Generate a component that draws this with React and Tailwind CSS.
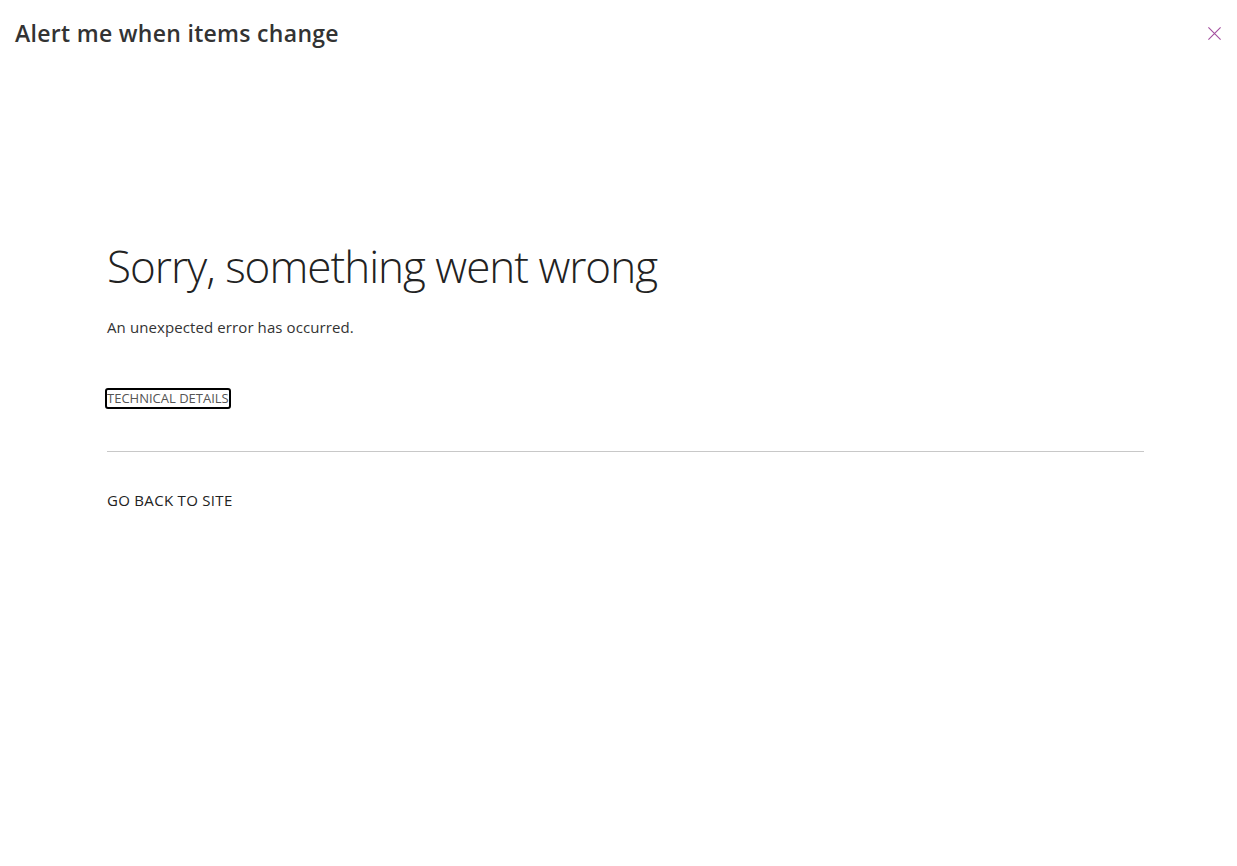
export default function App() {
  return (
    <div className="min-h-screen w-full bg-white text-[#333] font-['Open_Sans',sans-serif]">
      <header className="flex items-center justify-between pl-[15px] pr-[8px] pt-[16px]">
        <h1 className="text-[23px] leading-[34px] font-semibold tracking-[0.3px] text-[#333]">
          Alert me when items change
        </h1>
        <button className="w-[30px] h-[30px] flex items-center justify-center text-[#a4509f]" aria-label="Close">
          <svg width="15" height="15" viewBox="0 0 16 16" fill="none" stroke="currentColor" strokeWidth="1.2">
            <path d="M1.5 1.5 L14.5 14.5 M14.5 1.5 L1.5 14.5" />
          </svg>
        </button>
      </header>

      <main className="pl-[107px] pr-[93px] pt-[188px]">
        <h2 className="text-[44px] leading-[56px] font-light tracking-[-1px] text-[#222]">
          Sorry, something went wrong
        </h2>
        <p className="mt-[23px] text-[15px] leading-[20px] text-[#333] tracking-[0.1px]">
          An unexpected error has occurred.
        </p>
        <div className="mt-[48px]">
          <button className="-ml-[2px] px-0 h-[21px] border-2 border-black rounded-[3px] text-[13px] leading-[16px] text-[#555] uppercase">
            Technical Details
          </button>
        </div>
        <div className="mt-[42px] border-t border-[#c8c8c8]" />
        <a href="#" className="block mt-[38px] text-[15px] leading-[20px] text-[#222] uppercase tracking-[0.3px]">
          Go back to site
        </a>
      </main>
    </div>
  );
}
